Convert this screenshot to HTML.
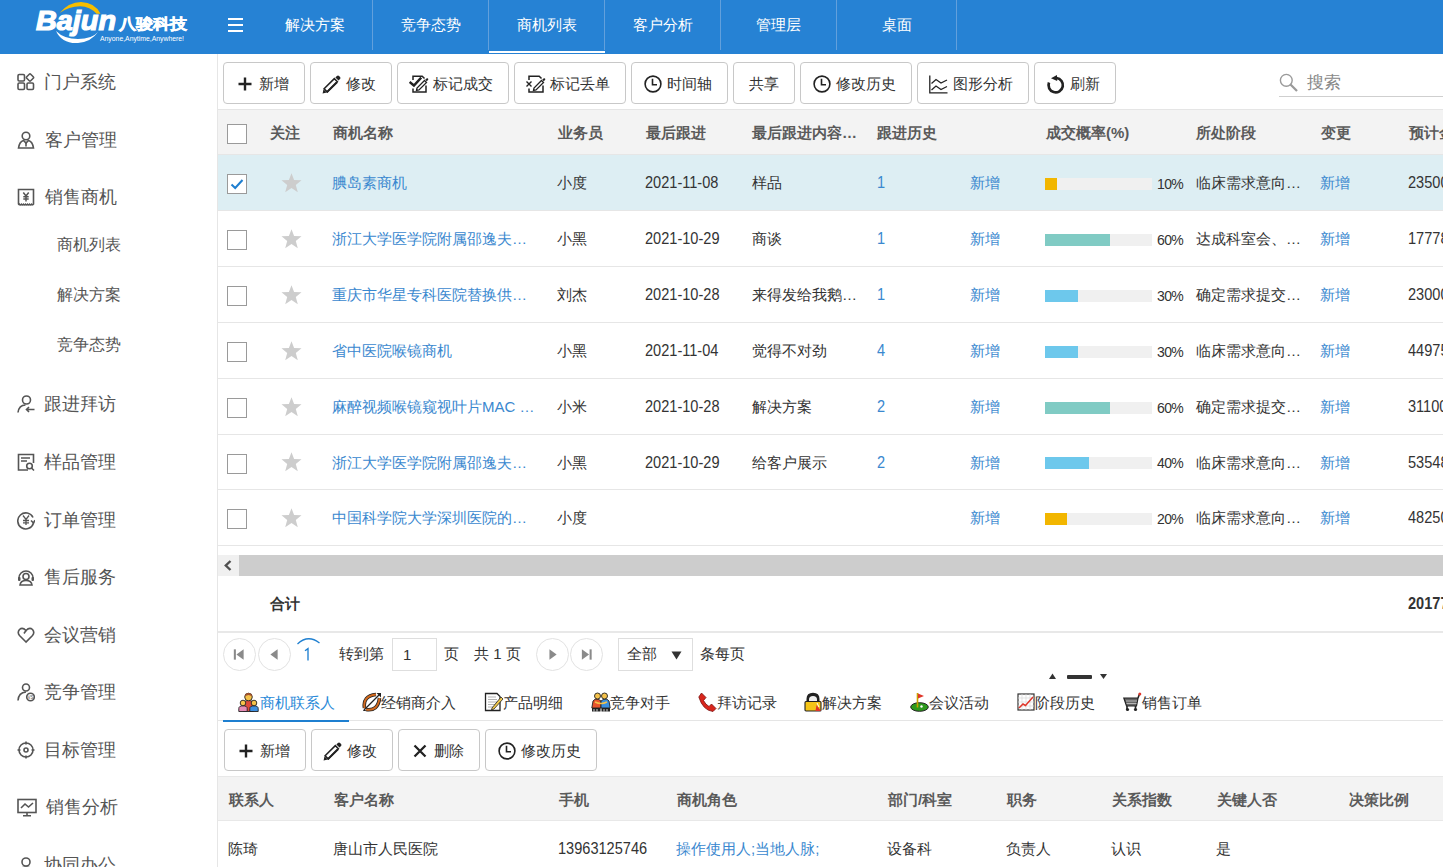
<!DOCTYPE html>
<html><head><meta charset="utf-8">
<style>
*{box-sizing:border-box;margin:0;padding:0}
html,body{width:1443px;height:867px;overflow:hidden;background:#fff;font-family:"Liberation Sans",sans-serif;color:#333}
.abs{position:absolute}
#hdr{position:absolute;left:0;top:0;width:1443px;height:54px;background:#2682d4}
.tab{position:absolute;top:0;height:50px;line-height:50px;color:#fff;font-size:15px;text-align:center}
#side{position:absolute;left:0;top:54px;width:218px;height:813px;border-right:1px solid #e6e6e6;background:#fff}
.mi{position:absolute;font-size:18px;color:#555;line-height:24px;height:24px;white-space:nowrap}
.si{position:absolute;left:57px;font-size:16px;color:#555;line-height:22px;white-space:nowrap}
.btn{position:absolute;top:62px;height:42px;border:1px solid #c8c8c8;border-radius:4px;background:#fff;font-size:15px;color:#333;line-height:40px;white-space:nowrap}
.btn span{position:absolute}
.th{position:absolute;top:109px;left:218px;width:1225px;height:46px;background:#f3f3f3;border-top:1px solid #e5e5e5;border-bottom:1px solid #e6e6e6}
.hc{position:absolute;font-size:15px;font-weight:bold;color:#5a5a5a;line-height:20px;white-space:nowrap}
.row{position:absolute;left:218px;width:1225px;border-bottom:1px solid #e6e6e6}
.cell{position:absolute;font-size:15px;line-height:20px;white-space:nowrap;color:#333}
.num{font-size:16px;transform:scaleX(0.91);transform-origin:0 0}
.lnk{color:#3a88cf}
.cb{position:absolute;left:227px;width:20px;height:20px;border:1px solid #9a9a9a;background:#fff}
.bar{position:absolute;left:1045px;width:107px;height:12px;background:#f0f0f0}
.bar i{position:absolute;left:0;top:0;height:12px}
.pct{position:absolute;left:1157px;font-size:14px;letter-spacing:-0.6px;line-height:16px;color:#333}
</style></head><body>
<div id="hdr">
<svg class="abs" style="left:0;top:0" width="256" height="54" viewBox="0 0 256 54">
<path d="M59.5 13 Q69 2 81 2 Q95 2.5 100.5 13.8 L96.5 13.8 Q90 6.5 80 6.3 Q69 6.5 59.5 13 Z" fill="#f6be00"/>
<path d="M56 31 Q62 44 78 43 Q91 42 98 32 Q92 39 78 39 Q64 39 56 31 Z" fill="#fff"/>
<text x="36" y="29.5" font-family="Liberation Sans" font-weight="bold" font-style="italic" font-size="27" fill="#fff" stroke="#fff" stroke-width="1.2" textLength="80" lengthAdjust="spacingAndGlyphs">Bajun</text>
<text x="119" y="28.8" font-size="15" font-weight="bold" fill="#fff" stroke="#fff" stroke-width="0.5" textLength="68" lengthAdjust="spacingAndGlyphs">八骏科技</text>
<text x="100" y="41" font-size="7" fill="#fff" textLength="84" lengthAdjust="spacingAndGlyphs" font-family="Liberation Sans">Anyone,Anytime,Anywhere!</text>
</svg>
<div class="abs" style="left:228px;top:18px;width:15px;height:14px;border-top:2px solid #fff;border-bottom:2px solid #fff"><div style="margin-top:4px;height:2px;background:#fff"></div></div>
<div class="tab" style="left:257px;width:115px">解决方案</div>
<div class="tab" style="left:373px;width:115px">竞争态势</div>
<div class="tab" style="left:489px;width:115px">商机列表</div>
<div class="tab" style="left:605px;width:115px">客户分析</div>
<div class="tab" style="left:721px;width:115px">管理层</div>
<div class="tab" style="left:837px;width:119px">桌面</div>
<div class="abs" style="left:372px;top:0;width:1px;height:50px;background:#62a0dc"></div>
<div class="abs" style="left:488px;top:0;width:1px;height:50px;background:#62a0dc"></div>
<div class="abs" style="left:604px;top:0;width:1px;height:50px;background:#62a0dc"></div>
<div class="abs" style="left:720px;top:0;width:1px;height:50px;background:#62a0dc"></div>
<div class="abs" style="left:836px;top:0;width:1px;height:50px;background:#62a0dc"></div>
<div class="abs" style="left:956px;top:0;width:1px;height:50px;background:#62a0dc"></div>
<div class="abs" style="left:489px;top:51px;width:116px;height:2px;background:#fff"></div>
</div>
<div id="side"></div>
<svg class="abs" style="left:17px;top:73px" width="18" height="19" viewBox="0 0 18 19"><rect x="1" y="1.5" width="6.5" height="6.5" rx="1.2" fill="none" stroke="#555" stroke-width="1.6"/><rect x="1" y="10" width="6.5" height="6.5" rx="1.2" fill="none" stroke="#555" stroke-width="1.6"/><rect x="10" y="10" width="6.5" height="6.5" rx="1.2" fill="none" stroke="#555" stroke-width="1.6"/><rect x="10.2" y="1.7" width="5.6" height="5.6" rx="1" transform="rotate(45 13 4.5)" fill="none" stroke="#555" stroke-width="1.6"/></svg>
<div class="mi" style="left:44px;top:70px">门户系统</div>
<svg class="abs" style="left:17px;top:130.5px" width="18" height="19" viewBox="0 0 18 19"><circle cx="9" cy="5" r="3.8" fill="none" stroke="#555" stroke-width="1.6"/><path d="M1.5 17 Q2.5 10.5 6.5 9.5 L9 12 L11.5 9.5 Q15.5 10.5 16.5 17 Z" fill="none" stroke="#555" stroke-width="1.6"/><path d="M9 11.5 L9 15.5" fill="none" stroke="#555" stroke-width="1.6"/></svg>
<div class="mi" style="left:45px;top:127.5px">客户管理</div>
<svg class="abs" style="left:17px;top:188px" width="18" height="19" viewBox="0 0 18 19"><path d="M1.5 1.5 H16.5 V16 Q15.5 17.5 14.5 16.3 Q13.5 17.5 12.5 16.3 Q11.5 17.5 10.5 16.3 Q9.5 17.5 8.5 16.3 Q7.5 17.5 6.5 16.3 Q5.5 17.5 4.5 16.3 Q3.5 17.5 2.5 16.3 Q2 17 1.5 16 Z" fill="none" stroke="#555" stroke-width="1.6"/><path d="M6.3 4.5 L9 8 L11.7 4.5 M9 8 V13.5 M6.3 8.8 H11.7 M6.3 11 H11.7" fill="none" stroke="#555" stroke-width="1.5"/></svg>
<div class="mi" style="left:45px;top:185px">销售商机</div>
<svg class="abs" style="left:17px;top:395px" width="18" height="19" viewBox="0 0 18 19"><circle cx="9.5" cy="5" r="4" fill="none" stroke="#555" stroke-width="1.6"/><path d="M1 17.5 Q2 10 8.5 10" fill="none" stroke="#555" stroke-width="1.6"/><path d="M17.5 14.5 H9.5 M12 12 L9.5 14.5 L12 17" fill="none" stroke="#555" stroke-width="1.6"/></svg>
<div class="mi" style="left:44px;top:392px">跟进拜访</div>
<svg class="abs" style="left:17px;top:453px" width="18" height="19" viewBox="0 0 18 19"><path d="M11 17 H1.5 V1.5 H16.5 V10" fill="none" stroke="#555" stroke-width="1.6"/><path d="M4 5 H13 M4 8 H10" fill="none" stroke="#555" stroke-width="1.6"/><circle cx="12.5" cy="13" r="2.8" fill="none" stroke="#555" stroke-width="1.6"/><path d="M14.5 15 L17 17.5" fill="none" stroke="#555" stroke-width="1.6"/></svg>
<div class="mi" style="left:44px;top:450px">样品管理</div>
<svg class="abs" style="left:17px;top:510.5px" width="18" height="19" viewBox="0 0 18 19"><path d="M16 6.5 A8 8 0 1 0 16.5 12" fill="none" stroke="#555" stroke-width="1.6"/><path d="M14 9.5 L16.5 12 L18 9.2" fill="none" stroke="#555" stroke-width="1.6"/><path d="M6 4.5 L9 8.5 L12 4.5 M9 8.5 V14 M6 9.5 H12 M6 11.8 H12" fill="none" stroke="#555" stroke-width="1.3"/></svg>
<div class="mi" style="left:44px;top:507.5px">订单管理</div>
<svg class="abs" style="left:17px;top:568px" width="18" height="19" viewBox="0 0 18 19"><path d="M2 10 A7 7 0 0 1 16 10" fill="none" stroke="#555" stroke-width="1.6"/><rect x="1" y="9" width="2.5" height="4" rx="1" fill="#555"/><rect x="14.5" y="9" width="2.5" height="4" rx="1" fill="#555"/><circle cx="9" cy="8.5" r="3" fill="none" stroke="#555" stroke-width="1.6"/><path d="M3 17 Q3.5 12.5 9 12.5 Q14.5 12.5 15 17 Z" fill="none" stroke="#555" stroke-width="1.6"/></svg>
<div class="mi" style="left:44px;top:565px">售后服务</div>
<svg class="abs" style="left:17px;top:625.5px" width="18" height="19" viewBox="0 0 18 19"><path d="M9 16 L2.5 9.5 Q0 6.5 2.5 3.5 Q5.5 1 9 4.5 Q12.5 1 15.5 3.5 Q18 6.5 15.5 9.5 Z" fill="none" stroke="#555" stroke-width="1.6"/><path d="M9 4.5 L7 7.5" fill="none" stroke="#555" stroke-width="1.6"/></svg>
<div class="mi" style="left:44px;top:622.5px">会议营销</div>
<svg class="abs" style="left:17px;top:683px" width="18" height="19" viewBox="0 0 18 19"><circle cx="9" cy="4.5" r="3.5" fill="none" stroke="#555" stroke-width="1.6"/><path d="M1 17.5 Q1.5 9.5 9 9" fill="none" stroke="#555" stroke-width="1.6"/><circle cx="13.5" cy="14" r="3.8" fill="none" stroke="#555" stroke-width="1.6"/><text x="13.5" y="15.6" font-size="4.5" text-anchor="middle" fill="#555" font-family="Liberation Sans">VS</text></svg>
<div class="mi" style="left:44px;top:680px">竞争管理</div>
<svg class="abs" style="left:17px;top:740.5px" width="18" height="19" viewBox="0 0 18 19"><circle cx="9" cy="9" r="7" fill="none" stroke="#555" stroke-width="1.6"/><circle cx="9" cy="9" r="2" fill="none" stroke="#555" stroke-width="1.6"/><path d="M9 0.5 V3.5 M9 14.5 V17.5 M0.5 9 H3.5 M14.5 9 H17.5" fill="none" stroke="#555" stroke-width="1.6"/></svg>
<div class="mi" style="left:44px;top:737.5px">目标管理</div>
<svg class="abs" style="left:17px;top:798px" width="20" height="19" viewBox="0 0 20 19"><rect x="1" y="1.5" width="18" height="13" fill="none" stroke="#555" stroke-width="1.6"/><path d="M4 10 L8 6 L11.5 9 L16 5" fill="none" stroke="#555" stroke-width="1.6"/><path d="M10 14.5 V17.5 M6 17.8 H14" fill="none" stroke="#555" stroke-width="1.6"/></svg>
<div class="mi" style="left:46px;top:795px">销售分析</div>
<svg class="abs" style="left:17px;top:855.5px" width="18" height="19" viewBox="0 0 18 19"><circle cx="9" cy="6" r="4" fill="none" stroke="#555" stroke-width="1.6"/><path d="M1.5 18 Q2 11 9 11 Q16 11 16.5 18" fill="none" stroke="#555" stroke-width="1.6"/></svg>
<div class="mi" style="left:44px;top:852.5px">协同办公</div>
<div class="si" style="top:234px">商机列表</div>
<div class="si" style="top:284px">解决方案</div>
<div class="si" style="top:334px">竞争态势</div>
<div class="btn" style="left:223px;top:62px;width:82px;height:42px"><div class="abs" style="left:14px;top:14px;line-height:0"><svg width="14" height="14" viewBox="0 0 14 14"><path d="M7 0.5V13.5M0.5 7H13.5" stroke="#222" stroke-width="2.4"/></svg></div><span style="left:35px;top:1px">新增</span></div>
<div class="btn" style="left:310px;top:62px;width:82px;height:42px"><div class="abs" style="left:11px;top:11px;line-height:0"><svg width="20" height="20" viewBox="0 0 20 20"><path d="M12.3 4.6 L15.4 7.7 L5.2 17.9 L2.1 14.8 Z" fill="none" stroke="#222" stroke-width="1.5"/><path d="M14.9 8.2 L4.7 18.4" stroke="#222" stroke-width="2"/><path d="M13.4 3.5 L14.9 2 Q16 0.9 17.1 2 L18 2.9 Q19.1 4 18 5.1 L16.5 6.6 Z" fill="#222"/><path d="M0.6 19.4 L1.5 15.2 L4.8 18.5 Z" fill="#222"/></svg></div><span style="left:35px;top:1px">修改</span></div>
<div class="btn" style="left:397px;top:62px;width:112px;height:42px"><div class="abs" style="left:11px;top:12px;line-height:0"><svg width="20" height="20" viewBox="0 0 20 20"><path d="M4 5 V1.3 H13.2 L15.5 3.5 M17 10.5 V17 H4 V13.5" fill="none" stroke="#222" stroke-width="1.5"/><path d="M0.6 7 L4.9 10.5 L12.2 2.6" fill="none" stroke="#222" stroke-width="2.4"/><path d="M7.5 15.5 L8 13 L15.5 5.5 L17.5 7.5 L10 15 Z" fill="none" stroke="#222" stroke-width="1.3"/><path d="M16.2 4.8 L17.5 3.5 Q18.3 2.8 19 3.5 Q19.7 4.2 19 5 L17.8 6.3 Z" fill="#222"/></svg></div><span style="left:35px;top:1px">标记成交</span></div>
<div class="btn" style="left:514px;top:62px;width:112px;height:42px"><div class="abs" style="left:11px;top:12px;line-height:0"><svg width="20" height="20" viewBox="0 0 20 20"><path d="M3 5 V1.3 H13.2 L15.5 3.5 M17 10.5 V17 H3 V13.5" fill="none" stroke="#222" stroke-width="1.5"/><path d="M0.5 6.5 L5.5 11.5 M5.5 6.5 L0.5 11.5" fill="none" stroke="#222" stroke-width="1.4"/><path d="M7.5 15.5 L8 13 L15.5 5.5 L17.5 7.5 L10 15 Z" fill="none" stroke="#222" stroke-width="1.3"/><path d="M16.2 4.8 L17.5 3.5 Q18.3 2.8 19 3.5 Q19.7 4.2 19 5 L17.8 6.3 Z" fill="#222"/></svg></div><span style="left:35px;top:1px">标记丢单</span></div>
<div class="btn" style="left:631px;top:62px;width:97px;height:42px"><div class="abs" style="left:12px;top:12px;line-height:0"><svg width="18" height="18" viewBox="0 0 18 18"><circle cx="9" cy="9" r="7.9" fill="none" stroke="#222" stroke-width="1.6"/><path d="M8.5 3.8 V9.7 H13" fill="none" stroke="#222" stroke-width="1.6"/></svg></div><span style="left:35px;top:1px">时间轴</span></div>
<div class="btn" style="left:733px;top:62px;width:62px;height:42px"><span style="left:15px;top:1px">共享</span></div>
<div class="btn" style="left:800px;top:62px;width:112px;height:42px"><div class="abs" style="left:12px;top:12px;line-height:0"><svg width="18" height="18" viewBox="0 0 18 18"><circle cx="9" cy="9" r="7.9" fill="none" stroke="#222" stroke-width="1.6"/><path d="M8.5 3.8 V9.7 H13" fill="none" stroke="#222" stroke-width="1.6"/></svg></div><span style="left:35px;top:1px">修改历史</span></div>
<div class="btn" style="left:917px;top:62px;width:112px;height:42px"><div class="abs" style="left:11px;top:12px;line-height:0"><svg width="19" height="19" viewBox="0 0 19 19"><path d="M0.8 0.5 V17.8 H18.5" fill="none" stroke="#222" stroke-width="1.3"/><path d="M2.5 8.5 L7 4.5 L12 8 L18 5 M2.5 15 L7 11 L12 14.5 L18 11.5" fill="none" stroke="#222" stroke-width="1.3"/></svg></div><span style="left:35px;top:1px">图形分析</span></div>
<div class="btn" style="left:1034px;top:62px;width:82px;height:42px"><div class="abs" style="left:11px;top:12px;line-height:0"><svg width="19" height="20" viewBox="0 0 19 20"><path d="M10.5 3 A7.2 7.2 0 1 1 3 7.5" fill="none" stroke="#222" stroke-width="2.7"/><path d="M11 0 L11.2 6 L5 3.2 Z" fill="#222"/></svg></div><span style="left:35px;top:1px">刷新</span></div>
<svg class="abs" style="left:1279px;top:73px" width="20" height="20" viewBox="0 0 20 20"><circle cx="7.3" cy="7.3" r="5.9" fill="none" stroke="#9a9a9a" stroke-width="1.4"/><path d="M11.5 11.5 L18 18" stroke="#9a9a9a" stroke-width="2.3"/></svg>
<div class="abs" style="left:1307px;top:71.5px;font-size:17px;line-height:22px;color:#888">搜索</div>
<div class="abs" style="left:1279px;top:96px;width:164px;height:1px;background:#cfcfcf"></div>
<div class="th"></div>
<div class="cb" style="top:124px"></div>
<div class="hc" style="left:270px;top:123px">关注</div>
<div class="hc" style="left:333px;top:123px">商机名称</div>
<div class="hc" style="left:558px;top:123px">业务员</div>
<div class="hc" style="left:646px;top:123px">最后跟进</div>
<div class="hc" style="left:752px;top:123px">最后跟进内容…</div>
<div class="hc" style="left:877px;top:123px">跟进历史</div>
<div class="hc" style="left:1046px;top:123px">成交概率(%)</div>
<div class="hc" style="left:1196px;top:123px">所处阶段</div>
<div class="hc" style="left:1321px;top:123px">变更</div>
<div class="hc" style="left:1409px;top:123px">预计金额</div>
<div class="row" style="top:155px;height:56px;background:#ddeef3"></div>
<div class="cb" style="top:174.0px"><svg width="18" height="18" viewBox="0 0 18 18" style="position:absolute;left:0;top:0"><path d="M3.5 9.5 L7.2 13 L14.5 5" fill="none" stroke="#1e7fd0" stroke-width="2"/></svg></div>
<div class="abs" style="left:281px;top:172.5px;line-height:0"><svg width="21" height="20" viewBox="0 0 21 20"><path d="M10.5 0.3 L13.1 7 L20.5 7.3 L14.8 11.9 L16.8 19.2 L10.5 15 L4.2 19.2 L6.2 11.9 L0.5 7.3 L7.9 7 Z" fill="#cdcdcd"/></svg></div>
<div class="cell lnk" style="left:332px;top:173.0px">腆岛素商机</div>
<div class="cell" style="left:557px;top:173.0px">小度</div>
<div class="cell num" style="left:645px;top:173.0px">2021-11-08</div>
<div class="cell" style="left:752px;top:173.0px">样品</div>
<div class="cell lnk num" style="left:877px;top:173.0px">1</div>
<div class="cell lnk" style="left:970px;top:173.0px">新增</div>
<div class="bar" style="top:177.5px"><i style="width:12px;background:#f2b600"></i></div>
<div class="pct" style="top:175.5px">10%</div>
<div class="cell" style="left:1196px;top:173.0px">临床需求意向…</div>
<div class="cell lnk" style="left:1320px;top:173.0px">新增</div>
<div class="cell num" style="left:1408px;top:173.0px">23500</div>
<div class="row" style="top:211px;height:56px;background:#fff"></div>
<div class="cb" style="top:230.0px"></div>
<div class="abs" style="left:281px;top:228.5px;line-height:0"><svg width="21" height="20" viewBox="0 0 21 20"><path d="M10.5 0.3 L13.1 7 L20.5 7.3 L14.8 11.9 L16.8 19.2 L10.5 15 L4.2 19.2 L6.2 11.9 L0.5 7.3 L7.9 7 Z" fill="#cdcdcd"/></svg></div>
<div class="cell lnk" style="left:332px;top:229.0px">浙江大学医学院附属邵逸夫…</div>
<div class="cell" style="left:557px;top:229.0px">小黑</div>
<div class="cell num" style="left:645px;top:229.0px">2021-10-29</div>
<div class="cell" style="left:752px;top:229.0px">商谈</div>
<div class="cell lnk num" style="left:877px;top:229.0px">1</div>
<div class="cell lnk" style="left:970px;top:229.0px">新增</div>
<div class="bar" style="top:233.5px"><i style="width:65px;background:#80cbc4"></i></div>
<div class="pct" style="top:231.5px">60%</div>
<div class="cell" style="left:1196px;top:229.0px">达成科室会、…</div>
<div class="cell lnk" style="left:1320px;top:229.0px">新增</div>
<div class="cell num" style="left:1408px;top:229.0px">17778</div>
<div class="row" style="top:267px;height:56px;background:#fff"></div>
<div class="cb" style="top:286.0px"></div>
<div class="abs" style="left:281px;top:284.5px;line-height:0"><svg width="21" height="20" viewBox="0 0 21 20"><path d="M10.5 0.3 L13.1 7 L20.5 7.3 L14.8 11.9 L16.8 19.2 L10.5 15 L4.2 19.2 L6.2 11.9 L0.5 7.3 L7.9 7 Z" fill="#cdcdcd"/></svg></div>
<div class="cell lnk" style="left:332px;top:285.0px">重庆市华星专科医院替换供…</div>
<div class="cell" style="left:557px;top:285.0px">刘杰</div>
<div class="cell num" style="left:645px;top:285.0px">2021-10-28</div>
<div class="cell" style="left:752px;top:285.0px">来得发给我鹅…</div>
<div class="cell lnk num" style="left:877px;top:285.0px">1</div>
<div class="cell lnk" style="left:970px;top:285.0px">新增</div>
<div class="bar" style="top:289.5px"><i style="width:33px;background:#6dc8ec"></i></div>
<div class="pct" style="top:287.5px">30%</div>
<div class="cell" style="left:1196px;top:285.0px">确定需求提交…</div>
<div class="cell lnk" style="left:1320px;top:285.0px">新增</div>
<div class="cell num" style="left:1408px;top:285.0px">23000</div>
<div class="row" style="top:323px;height:56px;background:#fff"></div>
<div class="cb" style="top:342.0px"></div>
<div class="abs" style="left:281px;top:340.5px;line-height:0"><svg width="21" height="20" viewBox="0 0 21 20"><path d="M10.5 0.3 L13.1 7 L20.5 7.3 L14.8 11.9 L16.8 19.2 L10.5 15 L4.2 19.2 L6.2 11.9 L0.5 7.3 L7.9 7 Z" fill="#cdcdcd"/></svg></div>
<div class="cell lnk" style="left:332px;top:341.0px">省中医院喉镜商机</div>
<div class="cell" style="left:557px;top:341.0px">小黑</div>
<div class="cell num" style="left:645px;top:341.0px">2021-11-04</div>
<div class="cell" style="left:752px;top:341.0px">觉得不对劲</div>
<div class="cell lnk num" style="left:877px;top:341.0px">4</div>
<div class="cell lnk" style="left:970px;top:341.0px">新增</div>
<div class="bar" style="top:345.5px"><i style="width:33px;background:#6dc8ec"></i></div>
<div class="pct" style="top:343.5px">30%</div>
<div class="cell" style="left:1196px;top:341.0px">临床需求意向…</div>
<div class="cell lnk" style="left:1320px;top:341.0px">新增</div>
<div class="cell num" style="left:1408px;top:341.0px">44975</div>
<div class="row" style="top:379px;height:56px;background:#fff"></div>
<div class="cb" style="top:398.0px"></div>
<div class="abs" style="left:281px;top:396.5px;line-height:0"><svg width="21" height="20" viewBox="0 0 21 20"><path d="M10.5 0.3 L13.1 7 L20.5 7.3 L14.8 11.9 L16.8 19.2 L10.5 15 L4.2 19.2 L6.2 11.9 L0.5 7.3 L7.9 7 Z" fill="#cdcdcd"/></svg></div>
<div class="cell lnk" style="left:332px;top:397.0px">麻醉视频喉镜窥视叶片MAC …</div>
<div class="cell" style="left:557px;top:397.0px">小米</div>
<div class="cell num" style="left:645px;top:397.0px">2021-10-28</div>
<div class="cell" style="left:752px;top:397.0px">解决方案</div>
<div class="cell lnk num" style="left:877px;top:397.0px">2</div>
<div class="cell lnk" style="left:970px;top:397.0px">新增</div>
<div class="bar" style="top:401.5px"><i style="width:65px;background:#80cbc4"></i></div>
<div class="pct" style="top:399.5px">60%</div>
<div class="cell" style="left:1196px;top:397.0px">确定需求提交…</div>
<div class="cell lnk" style="left:1320px;top:397.0px">新增</div>
<div class="cell num" style="left:1408px;top:397.0px">31100</div>
<div class="row" style="top:435px;height:55px;background:#fff"></div>
<div class="cb" style="top:453.5px"></div>
<div class="abs" style="left:281px;top:452.0px;line-height:0"><svg width="21" height="20" viewBox="0 0 21 20"><path d="M10.5 0.3 L13.1 7 L20.5 7.3 L14.8 11.9 L16.8 19.2 L10.5 15 L4.2 19.2 L6.2 11.9 L0.5 7.3 L7.9 7 Z" fill="#cdcdcd"/></svg></div>
<div class="cell lnk" style="left:332px;top:452.5px">浙江大学医学院附属邵逸夫…</div>
<div class="cell" style="left:557px;top:452.5px">小黑</div>
<div class="cell num" style="left:645px;top:452.5px">2021-10-29</div>
<div class="cell" style="left:752px;top:452.5px">给客户展示</div>
<div class="cell lnk num" style="left:877px;top:452.5px">2</div>
<div class="cell lnk" style="left:970px;top:452.5px">新增</div>
<div class="bar" style="top:457.0px"><i style="width:44px;background:#6dc8ec"></i></div>
<div class="pct" style="top:455.0px">40%</div>
<div class="cell" style="left:1196px;top:452.5px">临床需求意向…</div>
<div class="cell lnk" style="left:1320px;top:452.5px">新增</div>
<div class="cell num" style="left:1408px;top:452.5px">53548</div>
<div class="row" style="top:490px;height:56px;background:#fff"></div>
<div class="cb" style="top:509.0px"></div>
<div class="abs" style="left:281px;top:507.5px;line-height:0"><svg width="21" height="20" viewBox="0 0 21 20"><path d="M10.5 0.3 L13.1 7 L20.5 7.3 L14.8 11.9 L16.8 19.2 L10.5 15 L4.2 19.2 L6.2 11.9 L0.5 7.3 L7.9 7 Z" fill="#cdcdcd"/></svg></div>
<div class="cell lnk" style="left:332px;top:508.0px">中国科学院大学深圳医院的…</div>
<div class="cell" style="left:557px;top:508.0px">小度</div>
<div class="cell lnk" style="left:970px;top:508.0px">新增</div>
<div class="bar" style="top:512.5px"><i style="width:22px;background:#f2b600"></i></div>
<div class="pct" style="top:510.5px">20%</div>
<div class="cell" style="left:1196px;top:508.0px">临床需求意向…</div>
<div class="cell lnk" style="left:1320px;top:508.0px">新增</div>
<div class="cell num" style="left:1408px;top:508.0px">48250</div>
<div class="abs" style="left:218px;top:555px;width:1225px;height:21px;background:#cdcdcd"></div>
<div class="abs" style="left:218px;top:555px;width:21px;height:21px;background:#f0f0f0"></div>
<svg class="abs" style="left:223px;top:560px" width="10" height="11" viewBox="0 0 10 11"><path d="M7.5 1 L2.8 5.5 L7.5 10" fill="none" stroke="#505050" stroke-width="2.4"/></svg>
<div class="cell" style="left:270px;top:594px;font-weight:bold;color:#333">合计</div>
<div class="cell num" style="left:1408px;top:594px;font-weight:bold;color:#333">201771</div>
<div class="abs" style="left:218px;top:631px;width:1225px;height:2px;background:#e8e8e8"></div>
<div class="abs" style="left:223px;top:638px;width:33px;height:33px;border:1px solid #e2e2e2;border-radius:50%"></div><svg class="abs" style="left:223px;top:638px" width="33" height="33" viewBox="0 0 32 32"><rect x="10.5" y="11" width="2" height="10" fill="#8a8a8a"/><path d="M20 11 L13 16 L20 21 Z" fill="#8a8a8a"/></svg>
<div class="abs" style="left:258px;top:638px;width:33px;height:33px;border:1px solid #e2e2e2;border-radius:50%"></div><svg class="abs" style="left:258px;top:638px" width="33" height="33" viewBox="0 0 32 32"><path d="M19 11 L12 16 L19 21 Z" fill="#8a8a8a"/></svg>
<svg class="abs" style="left:296px;top:636px" width="26" height="10" viewBox="0 0 26 10"><path d="M1.5 8 Q12 -2 23.5 7" fill="none" stroke="#1e7fd0" stroke-width="1.3"/></svg>
<svg class="abs" style="left:300px;top:646px" width="14" height="16" viewBox="0 0 14 16"><path d="M5 4.8 L8 2.6 V14.5" fill="none" stroke="#1e7fd0" stroke-width="1.35"/></svg>
<div class="cell" style="left:339px;top:644px">转到第</div>
<div class="abs" style="left:392px;top:638px;width:45px;height:33px;border:1px solid #dedede"></div>
<div class="cell" style="left:403px;top:645px">1</div>
<div class="cell" style="left:444px;top:644px">页</div>
<div class="cell" style="left:474px;top:644px">共 1 页</div>
<div class="abs" style="left:536px;top:638px;width:33px;height:33px;border:1px solid #e2e2e2;border-radius:50%"></div><svg class="abs" style="left:536px;top:638px" width="33" height="33" viewBox="0 0 32 32"><path d="M13 11 L20 16 L13 21 Z" fill="#8a8a8a"/></svg>
<div class="abs" style="left:570px;top:638px;width:33px;height:33px;border:1px solid #e2e2e2;border-radius:50%"></div><svg class="abs" style="left:570px;top:638px" width="33" height="33" viewBox="0 0 32 32"><path d="M11.5 11 L18.5 16 L11.5 21 Z" fill="#8a8a8a"/><rect x="19" y="11" width="2" height="10" fill="#8a8a8a"/></svg>
<div class="abs" style="left:618px;top:638px;width:75px;height:33px;border:1px solid #dedede"></div>
<div class="cell" style="left:627px;top:644px">全部</div>
<svg class="abs" style="left:671px;top:651px" width="11" height="9" viewBox="0 0 11 9"><path d="M0.5 0.5 H10.5 L5.5 8.5 Z" fill="#333"/></svg>
<div class="cell" style="left:700px;top:644px">条每页</div>
<svg class="abs" style="left:1048px;top:672px" width="60" height="8" viewBox="0 0 60 8"><path d="M1 7 L4.5 1.5 L8 7 Z" fill="#333"/><rect x="19" y="3" width="25" height="4" rx="1" fill="#333"/><path d="M52 2 L59 2 L55.5 7 Z" fill="#333"/></svg>
<div class="abs" style="left:238px;top:692px;line-height:0"><svg width="21" height="20" viewBox="0 0 21 20"><path d="M5.5 19.5 V12 Q5.5 8.5 10.5 8.5 Q15.5 8.5 15.5 12 V19.5 Z" fill="#e0493a" stroke="#222" stroke-width="0.9"/><circle cx="10.5" cy="5" r="3.8" fill="#f5c24a" stroke="#222" stroke-width="0.9"/><path d="M6.7 4.5 Q7 1 10.5 1 Q14 1 14.3 4.5 Q12 3 10.5 3 Q9 3 6.7 4.5Z" fill="#a0522d"/><path d="M0.8 19.5 V16.5 Q0.8 13.8 5 13.8 Q9.2 13.8 9.2 16.5 V19.5 Z" fill="#e58bb6" stroke="#222" stroke-width="0.9"/><circle cx="5" cy="11" r="2.8" fill="#f5c24a" stroke="#222" stroke-width="0.9"/><path d="M11.8 19.5 V16.5 Q11.8 13.8 16 13.8 Q20.2 13.8 20.2 16.5 V19.5 Z" fill="#3d8fe0" stroke="#222" stroke-width="0.9"/><circle cx="16" cy="11" r="2.8" fill="#f5c24a" stroke="#222" stroke-width="0.9"/></svg></div>
<div class="cell" style="left:260px;top:693px;color:#2b8ad8">商机联系人</div>
<div class="abs" style="left:362px;top:692px;line-height:0"><svg width="20" height="20" viewBox="0 0 20 20"><path d="M2.5 16 Q0.5 4 14 2.5" fill="none" stroke="#222" stroke-width="3.6"/><path d="M2.5 16 Q0.5 4 14 2.5" fill="none" stroke="#d2691e" stroke-width="2"/><path d="M4 17.5 Q16 19.5 17.5 6" fill="none" stroke="#222" stroke-width="3.6"/><path d="M4 17.5 Q16 19.5 17.5 6" fill="none" stroke="#d2691e" stroke-width="2"/><path d="M3 17 L17 3" stroke="#222" stroke-width="1.3"/><path d="M14.5 1 L19 1 L19 5.5 Z" fill="#222"/><path d="M1 19 L4 19 L2.5 16 Z" fill="#222"/></svg></div>
<div class="cell" style="left:381px;top:693px;">经销商介入</div>
<div class="abs" style="left:484px;top:692px;line-height:0"><svg width="20" height="20" viewBox="0 0 20 20"><path d="M1.5 1.5 H13 L16 4.5 V18.5 H1.5 Z" fill="#fff" stroke="#222" stroke-width="1.3"/><path d="M4 5 H12 M4 7.5 H13 M4 10 H13 M4 12.5 H11 M4 15 H9" stroke="#aaa" stroke-width="0.9"/><path d="M8 16 L17 5 L19 7 L10 17 L7.5 18 Z" fill="#f2c94c" stroke="#222" stroke-width="0.8"/></svg></div>
<div class="cell" style="left:503px;top:693px;">产品明细</div>
<div class="abs" style="left:591px;top:692px;line-height:0"><svg width="20" height="20" viewBox="0 0 20 20"><path d="M0.8 16 L2 9 Q3.5 6.5 7 7 L10 9 L10 16 Z" fill="#e8542d" stroke="#222" stroke-width="0.9"/><path d="M19.2 16 L18 9 Q16.5 6.5 13 7 L10 9 L10 16 Z" fill="#3a8fe0" stroke="#222" stroke-width="0.9"/><circle cx="6.5" cy="4" r="3" fill="#f5c24a" stroke="#222" stroke-width="0.9"/><circle cx="13.5" cy="4" r="3" fill="#f5c24a" stroke="#222" stroke-width="0.9"/><path d="M1 16 H9.5 V19.5 H1 Z M10.5 16 H19 V19.5 H10.5 Z" fill="#222"/><path d="M3 17 V19.5 M6 17 V19.5 M13 17 V19.5 M16 17 V19.5" stroke="#fff" stroke-width="0.8"/><path d="M4 10 Q10 13 16 10" fill="none" stroke="#f5c24a" stroke-width="1.6"/></svg></div>
<div class="cell" style="left:610px;top:693px;">竞争对手</div>
<div class="abs" style="left:698px;top:692px;line-height:0"><svg width="19" height="20" viewBox="0 0 19 20"><path d="M3.5 1 L8 5.5 L5.5 8.5 Q7.5 12.5 11 14.5 L13.5 12 L18 16.5 L15 19.5 Q5 18.5 0.8 5 Z" fill="#d9261c" stroke="#7a1010" stroke-width="0.8"/></svg></div>
<div class="cell" style="left:717px;top:693px;">拜访记录</div>
<div class="abs" style="left:804px;top:692px;line-height:0"><svg width="18" height="20" viewBox="0 0 18 20"><path d="M2.5 10 V7 Q2.5 0.8 9 0.8 Q15.5 0.8 15.5 7 V10 Z" fill="#222"/><path d="M5 10 V7.5 Q5 4 9 4 Q13 4 13 7.5 V10" fill="#f0f0f0"/><rect x="1" y="9.5" width="16" height="9.5" rx="1" fill="#f5c518" stroke="#222" stroke-width="1.1"/><path d="M12.5 13 L17 19 L11.5 19 Z" fill="#e0362a"/><path d="M13 11 L15 15" stroke="#fff" stroke-width="1"/></svg></div>
<div class="cell" style="left:822px;top:693px;">解决方案</div>
<div class="abs" style="left:910px;top:692px;line-height:0"><svg width="19" height="20" viewBox="0 0 19 20"><ellipse cx="9.5" cy="15" rx="8.8" ry="4.3" fill="#2e9a1c" stroke="#222" stroke-width="1"/><path d="M7.5 15.5 V1" stroke="#c8a000" stroke-width="1.6"/><path d="M8 1.5 L14 4 L8 6.5 Z" fill="#e0362a"/><circle cx="11.5" cy="14.5" r="1.2" fill="#fff"/></svg></div>
<div class="cell" style="left:929px;top:693px;">会议活动</div>
<div class="abs" style="left:1017px;top:692px;line-height:0"><svg width="18" height="20" viewBox="0 0 18 20"><rect x="1" y="2" width="16" height="16" fill="#fff" stroke="#333" stroke-width="1.2"/><path d="M1 6 H17 M1 10 H17 M1 14 H17 M5 2 V18 M9 2 V18 M13 2 V18" stroke="#d8d8d8" stroke-width="0.7"/><path d="M2 16 L6 12 L8.5 13.5 L16 5" fill="none" stroke="#e0362a" stroke-width="1.5"/></svg></div>
<div class="cell" style="left:1035px;top:693px;">阶段历史</div>
<div class="abs" style="left:1123px;top:692px;line-height:0"><svg width="19" height="20" viewBox="0 0 19 20"><path d="M0.8 6 H15 L13.5 14 H3.5 Z" fill="#666" stroke="#222" stroke-width="1.2"/><path d="M3 9 H14 M3.5 11.5 H13.5" stroke="#ccc" stroke-width="0.8"/><path d="M15 6 L16.5 2" stroke="#222" stroke-width="1.5"/><circle cx="16.8" cy="2" r="1.5" fill="#e0362a"/><path d="M4 14 V17 M12.5 14 V17" stroke="#222" stroke-width="1.6"/><circle cx="4.5" cy="17.5" r="1.6" fill="#222"/><circle cx="12.5" cy="17.5" r="1.6" fill="#222"/></svg></div>
<div class="cell" style="left:1142px;top:693px;">销售订单</div>
<div class="abs" style="left:218px;top:720px;width:1225px;height:1px;background:#e5e5e5"></div>
<div class="abs" style="left:223px;top:720px;width:126px;height:2px;background:#1e7fd0"></div>
<div class="btn" style="left:224px;top:729px;width:82px;height:42px"><div class="abs" style="left:14px;top:14px;line-height:0"><svg width="14" height="14" viewBox="0 0 14 14"><path d="M7 0.5V13.5M0.5 7H13.5" stroke="#222" stroke-width="2.4"/></svg></div><span style="left:35px;top:1px">新增</span></div>
<div class="btn" style="left:311px;top:729px;width:82px;height:42px"><div class="abs" style="left:11px;top:11px;line-height:0"><svg width="20" height="20" viewBox="0 0 20 20"><path d="M12.3 4.6 L15.4 7.7 L5.2 17.9 L2.1 14.8 Z" fill="none" stroke="#222" stroke-width="1.5"/><path d="M14.9 8.2 L4.7 18.4" stroke="#222" stroke-width="2"/><path d="M13.4 3.5 L14.9 2 Q16 0.9 17.1 2 L18 2.9 Q19.1 4 18 5.1 L16.5 6.6 Z" fill="#222"/><path d="M0.6 19.4 L1.5 15.2 L4.8 18.5 Z" fill="#222"/></svg></div><span style="left:35px;top:1px">修改</span></div>
<div class="btn" style="left:398px;top:729px;width:82px;height:42px"><div class="abs" style="left:14px;top:14px;line-height:0"><svg width="14" height="14" viewBox="0 0 14 14"><path d="M1.5 1.5 L12.5 12.5 M12.5 1.5 L1.5 12.5" stroke="#222" stroke-width="2.3"/></svg></div><span style="left:35px;top:1px">删除</span></div>
<div class="btn" style="left:485px;top:729px;width:112px;height:42px"><div class="abs" style="left:12px;top:12px;line-height:0"><svg width="18" height="18" viewBox="0 0 18 18"><circle cx="9" cy="9" r="7.9" fill="none" stroke="#222" stroke-width="1.6"/><path d="M8.5 3.8 V9.7 H13" fill="none" stroke="#222" stroke-width="1.6"/></svg></div><span style="left:35px;top:1px">修改历史</span></div>
<div class="abs" style="left:218px;top:776px;width:1225px;height:45px;background:#f3f3f3;border-top:1px solid #e8e8e8;border-bottom:1px solid #e8e8e8"></div>
<div class="hc" style="left:229px;top:790px">联系人</div>
<div class="hc" style="left:334px;top:790px">客户名称</div>
<div class="hc" style="left:559px;top:790px">手机</div>
<div class="hc" style="left:677px;top:790px">商机角色</div>
<div class="hc" style="left:888px;top:790px">部门/科室</div>
<div class="hc" style="left:1007px;top:790px">职务</div>
<div class="hc" style="left:1112px;top:790px">关系指数</div>
<div class="hc" style="left:1217px;top:790px">关键人否</div>
<div class="hc" style="left:1349px;top:790px">决策比例</div>
<div class="cell" style="left:228px;top:839px">陈琦</div>
<div class="cell" style="left:333px;top:839px">唐山市人民医院</div>
<div class="cell num" style="left:558px;top:839px">13963125746</div>
<div class="cell lnk" style="left:676px;top:839px">操作使用人;当地人脉;</div>
<div class="cell" style="left:887px;top:839px">设备科</div>
<div class="cell" style="left:1006px;top:839px">负责人</div>
<div class="cell" style="left:1111px;top:839px">认识</div>
<div class="cell" style="left:1216px;top:839px">是</div>
</body></html>
